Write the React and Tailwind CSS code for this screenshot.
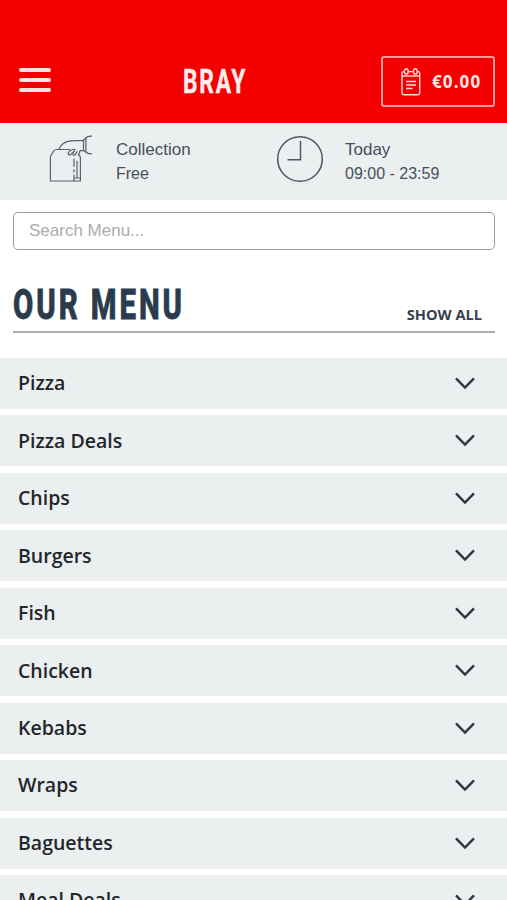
import React, { useState } from "react";

const categories = [
  "Pizza",
  "Pizza Deals",
  "Chips",
  "Burgers",
  "Fish",
  "Chicken",
  "Kebabs",
  "Wraps",
  "Baguettes",
  "Meal Deals",
];

const BasketIcon = () => (
  <svg width="20" height="28" viewBox="0 0 20 28" fill="none" stroke="#ffdcdc" strokeWidth="1.4">
    <path d="M3 3.6H2.4Q1 3.6 1 5V25Q1 26.7 2.7 26.7H17Q18.7 26.7 18.7 25V5Q18.7 3.6 17.2 3.6H17M7.6 3.6H12" />
    <path d="M1 8H18.7" />
    <ellipse cx="5.3" cy="3.4" rx="1.9" ry="2.7" />
    <ellipse cx="14.3" cy="3.4" rx="1.9" ry="2.7" />
    <path d="M5 13.5H15M5 17H15M5 20.5H11.5" />
  </svg>
);

const CollectionIcon = () => (
  <svg width="44" height="48" viewBox="0 0 44 48" fill="none" stroke="#56616b" strokeWidth="1.2" strokeLinecap="round" strokeLinejoin="round">
    <path d="M20.5 14.5H7Q5.5 14.7 4.5 16.3L2.2 20Q1.4 21.3 1.4 23V46H31.4V23Q31.4 21.5 30.2 19.8" />
    <path d="M10 14C12 9.5 15.5 7 20 6.1C22 5.6 24 5.6 26 5.6H34.3" />
    <path d="M42.5 1.2C39.5 1 38 1.5 36.9 3.2V17C38.2 18.5 39.8 18.9 42.5 18.8" />
    <path d="M36.9 3.2L34.5 5V15.4L36.9 17M34.3 15.3L31 15.6Q30.6 18.5 29.2 19.8" />
    <path d="M26 14.6C22.5 14 20.8 15.4 19.4 17.6C18.4 19.8 20.4 20.6 22 19.2L25.5 16" />
    <path d="M24 17.8C23.4 20.4 25.2 21 26.4 19.4L28 16.6" />
    <path d="M25 24V31.5M25 34.5V37M25 40V46M28 26V42M25.2 43H31.2" />
  </svg>
);

const ClockIcon = () => (
  <svg width="48" height="48" viewBox="0 0 48 48" fill="none" stroke="#4d5864" strokeWidth="1.5">
    <circle cx="24" cy="24" r="22.3" />
    <path d="M24.5 6V24.8H11.5" />
  </svg>
);

const Chevron = () => (
  <svg width="20" height="13" viewBox="0 0 20 13" fill="none" stroke="#2c3743" strokeWidth="2.4">
    <path d="M1 1.4L10 10.6L19 1.4" />
  </svg>
);

const App = () => {
  const [search, setSearch] = useState("");

  return (
    <div className="h-[900px] w-full overflow-hidden bg-white font-['Open_Sans',sans-serif]">
      <header className="flex h-[123px] items-end bg-[#f40000] pr-3 pl-[19px] pb-4">
        <button className="mb-[15px] flex w-[164px] flex-col gap-[6px]">
          <span className="h-1 w-8 rounded-full bg-[#ffe3e3]" />
          <span className="h-1 w-8 rounded-full bg-[#ffe3e3]" />
          <span className="h-1 w-8 rounded-full bg-[#ffe3e3]" />
        </button>
        <h1 className="mb-[9px] w-[64px] text-[33px] leading-8 font-bold text-[#fff0f0] font-['Roboto',sans-serif]">
          <span className="inline-block origin-left scale-x-[0.69] tracking-[2.6px] [-webkit-text-stroke:0.4px]">BRAY</span>
        </h1>
        <button className="ml-auto flex h-[51px] w-[114px] items-center rounded-[3px] border-2 border-[#ff9c9c] pl-[18px]">
          <BasketIcon />
          <span className="ml-[11px] text-[17px] font-bold tracking-[1.1px] text-[#ffe6e6]">€0.00</span>
        </button>
      </header>

      <div className="flex h-[77px] bg-[#ebeff0] text-[#47505b] font-['Liberation_Sans',Arial,sans-serif]">
        <div className="flex w-[276px] pt-3 pl-[49px]">
          <CollectionIcon />
          <div className="ml-[23px] pt-[2px]">
            <p className="text-[17px] leading-[25px]">Collection</p>
            <p className="text-[16px] leading-[24px]">Free</p>
          </div>
        </div>
        <div className="flex pt-3">
          <ClockIcon />
          <div className="ml-[21px] pt-[2px]">
            <p className="text-[17px] leading-[25px]">Today</p>
            <p className="text-[16px] leading-[24px]">09:00 - 23:59</p>
          </div>
        </div>
      </div>

      <div className="pr-3 pl-[13px] pt-3">
        <input
          type="text"
          value={search}
          onChange={(e) => setSearch(e.target.value)}
          placeholder="Search Menu..."
          className="block h-[38px] w-full rounded-[5px] border border-[#999c9e] px-[15px] text-[17px] text-gray-700 placeholder:text-[#acacac] font-['Liberation_Sans',Arial,sans-serif]"
        />
        <div className="flex h-[83px] items-end justify-between border-b-2 border-[#a9adaf]">
          <h2 className="mb-[4px] w-[172px] text-[42px] leading-[44px] font-extrabold whitespace-nowrap text-[#2b3b4e] font-['Roboto',sans-serif]">
            <span className="inline-block origin-left scale-x-[0.7] tracking-[4.2px] [-webkit-text-stroke:0.8px]">OUR MENU</span>
          </h2>
          <button className="mr-[13px] mb-[7px] text-[14.6px] leading-5 font-bold text-[#36414d]">SHOW ALL</button>
        </div>
      </div>

      <ul className="mt-[25px] flex flex-col gap-[6.45px]">
        {categories.map((name) => (
          <li
            key={name}
            className="flex h-[51px] shrink-0 items-center justify-between bg-[#ebeff0] pr-[32px] pl-[18px] text-[19.5px] font-semibold text-[#23272b]"
          >
            <span className="-mt-px">{name}</span>
            <Chevron />
          </li>
        ))}
      </ul>
    </div>
  );
};

export default App;
